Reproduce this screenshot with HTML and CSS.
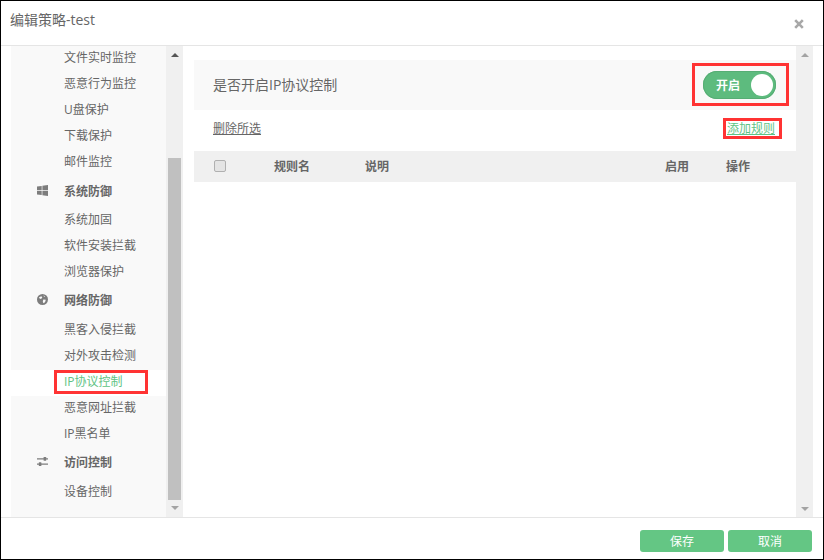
FILE: index.html
```html
<!DOCTYPE html>
<html lang="zh-CN">
<head>
<meta charset="utf-8">
<title>编辑策略</title>
<link rel="stylesheet" href="styles.css">
</head>
<body>
<div class="dialog">
  <header class="dialog-head">
    <h1 class="title">编辑策略-test</h1>
    <svg class="close" width="10" height="10" viewBox="0 0 10 10"><path d="M1.2 1.2 8.8 8.8M8.8 1.2 1.2 8.8" stroke="#a8a8a8" stroke-width="2.6" fill="none"/></svg>
  </header>
  <div class="dialog-body">
    <div class="side">
      <nav class="nav">
        <a class="item">文件实时监控</a>
        <a class="item">恶意行为监控</a>
        <a class="item">U盘保护</a>
        <a class="item">下载保护</a>
        <a class="item">邮件监控</a>
        <div class="group group-first">
          <svg class="gicon" width="11" height="11" viewBox="0 0 11 11"><path d="M0 1.6 4.7.9v4.2H0zM5.4.8 11 0v5.1H5.4zM0 5.8h4.7V10L0 9.4zM5.4 5.8H11V11l-5.6-.8z" fill="#7d7d7d"/></svg>
          <span>系统防御</span>
        </div>
        <a class="item">系统加固</a>
        <a class="item">软件安装拦截</a>
        <a class="item">浏览器保护</a>
        <div class="group">
          <svg class="gicon" width="11" height="11" viewBox="0 0 11 11"><circle cx="5.5" cy="5.5" r="5.5" fill="#7d7d7d"/><path d="M2 3.2 4.4 2.2 5.3 3.6 4 5 2.6 4.6zM6.3 5.6 8.8 5.8 8 8.2 6.4 9.2 5.8 7.4zM6.4 1.4 8 2.2 7.2 3z" fill="#f9f9f9"/></svg>
          <span>网络防御</span>
        </div>
        <a class="item">黑客入侵拦截</a>
        <a class="item">对外攻击检测</a>
        <a class="item active">IP协议控制<i class="mark mark-nav"></i></a>
        <a class="item">恶意网址拦截</a>
        <a class="item">IP黑名单</a>
        <div class="group">
          <svg class="gicon" width="11" height="11" viewBox="0 0 11 11"><path d="M0 2.2h11v1.4H0zM0 7.4h11v1.4H0z" fill="#7d7d7d"/><rect x="6.6" y="1" width="2.6" height="3.8" rx=".6" fill="#7d7d7d"/><rect x="1.8" y="6.2" width="2.6" height="3.8" rx=".6" fill="#7d7d7d"/></svg>
          <span>访问控制</span>
        </div>
        <a class="item">设备控制</a>
      </nav>
      <div class="scroll scroll-side">
        <b class="arrow up"></b>
        <div class="thumb"></div>
        <b class="arrow down"></b>
      </div>
    </div>
    <main class="main">
      <section class="switch-row">
        <span>是否开启IP协议控制</span>
        <div class="toggle">
          <span class="toggle-text">开启</span>
          <span class="knob"></span>
          <i class="mark mark-toggle"></i>
        </div>
      </section>
      <div class="link-row">
        <a class="link">删除所选</a>
        <a class="link link-add">添加规则<i class="mark mark-add"></i></a>
      </div>
      <div class="thead">
        <span class="cell-check"><span class="check"></span></span>
        <span class="cell-name">规则名</span>
        <span class="cell-desc">说明</span>
        <span class="cell-on">启用</span>
        <span class="cell-op">操作</span>
      </div>
    </main>
    <div class="scroll scroll-main">
      <b class="arrow up"></b>
      <b class="arrow down"></b>
    </div>
  </div>
  <footer class="dialog-foot">
    <button class="btn">保存</button>
    <button class="btn">取消</button>
  </footer>
</div>
</body>
</html>
```

FILE: styles.css
```css
* { box-sizing: border-box; }
html, body { margin: 0; padding: 0; background: #fff; }
body {
  width: 824px;
  height: 560px;
  overflow: hidden;
  font-family: "Open Sans", "Noto Sans CJK SC", sans-serif;
  font-size: 12px;
  color: #666;
}
.dialog {
  width: 824px;
  height: 560px;
  border: 1px solid #000;
  display: flex;
  flex-direction: column;
}
.dialog-head {
  height: 45px;
  flex: none;
  border-bottom: 1px solid #e5e5e5;
  display: flex;
  justify-content: space-between;
  align-items: flex-start;
  padding: 10px 19px 0 9px;
}
.title {
  margin: 0;
  font-size: 14px;
  font-weight: 400;
  line-height: 17px;
  color: #666;
}
.close { margin-top: 8px; }
.dialog-body {
  height: 471px;
  flex: none;
  display: flex;
  padding-left: 10px;
}
.side { width: 172px; flex: none; display: flex; }
.nav { width: 155px; background: #f9f9f9; }
.item {
  position: relative;
  display: block;
  height: 26px;
  line-height: 24px;
  padding-left: 53px;
  white-space: nowrap;
}
.item.active { background: #fff; color: #5fc385; }
.group {
  height: 32px;
  display: flex;
  align-items: center;
  padding: 0 0 5px 26px;
  font-weight: 700;
  color: #666;
}
.group-first { padding-bottom: 3px; }
.gicon { width: 11px; margin-right: 16px; flex: none; }
.scroll {
  width: 17px;
  flex: none;
  background: #f0f0f0;
  display: flex;
  flex-direction: column;
  align-items: center;
}
.thumb {
  width: 13px;
  height: 342px;
  margin-top: 101px;
  background: #c0c0c0;
}
.arrow { display: block; width: 0; height: 0; border: 4px solid transparent; }
.arrow.up { border-top: 0; border-bottom: 4px solid #555; margin-top: 7px; }
.arrow.down { border-bottom: 0; border-top: 4px solid #a3a3a3; margin-top: auto; margin-bottom: 6px; }
.scroll-main .arrow.up { border-bottom-color: #a3a3a3; }
.scroll-side .arrow.down { margin-top: 6px; }
.main { width: 613px; flex: none; padding: 14px 0 0 11px; }
.switch-row {
  height: 50px;
  background: #f9f9f9;
  display: flex;
  align-items: center;
  justify-content: space-between;
  padding: 0 20px 0 19px;
  font-size: 14px;
}
.switch-row > span:first-child { margin-bottom: 2px; }
.toggle {
  position: relative;
  width: 73px;
  height: 28px;
  border-radius: 14px;
  background: #5dbb7e;
  box-shadow: inset 0 0 0 1px #56ad74;
  display: flex;
  align-items: center;
  justify-content: space-between;
  padding: 0 3px 0 13px;
}
.toggle-text { color: #fff; font-weight: 700; font-size: 12px; }
.knob {
  width: 22px;
  height: 22px;
  border-radius: 50%;
  background: #fff;
}
.link-row {
  height: 41px;
  display: flex;
  justify-content: space-between;
  align-items: center;
  padding: 0 21px 2px 19px;
}
.link { position: relative; text-decoration: underline; color: #666; padding-bottom: 3px; }
.link-add { color: #5fc385; }
.thead {
  height: 31px;
  background: #f0f0f0;
  display: flex;
  align-items: center;
  padding-bottom: 2px;
  font-weight: 700;
  color: #666;
}
.cell-check { width: 80px; padding-left: 20px; display: flex; }
.check {
  width: 12px;
  height: 12px;
  border: 1px solid #b0b0b0;
  border-radius: 2px;
  background: #e4e4e4;
}
.cell-name { width: 91px; }
.cell-desc { width: 300px; }
.cell-on { width: 61px; }
.mark { position: absolute; border: 3px solid #ff3333; display: block; pointer-events: none; }
.mark-nav { left: 43px; top: 0; width: 94px; height: 24px; }
.mark-toggle { left: -11px; top: -8px; width: 97px; height: 43px; }
.mark-add { left: -4px; top: -1px; width: 59px; height: 21px; }
.dialog-foot {
  flex: 1;
  border-top: 1px solid #e5e5e5;
  display: flex;
  justify-content: flex-end;
  gap: 4px;
  padding: 12px 11px 0 0;
}
.btn {
  width: 84px;
  height: 22px;
  border: 0;
  border-radius: 3px;
  background: #64c684;
  color: #fff;
  font: inherit;
  font-size: 12px;
  padding: 0;
}
```
